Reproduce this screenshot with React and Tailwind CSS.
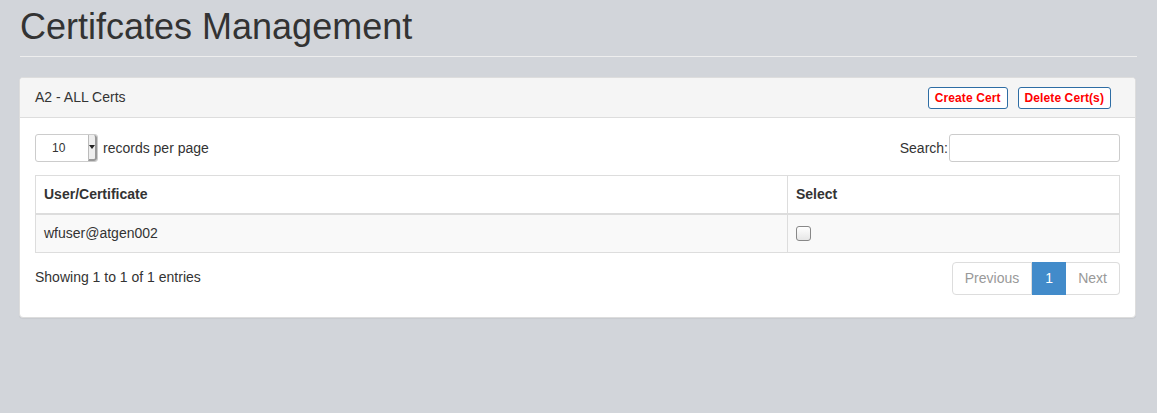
export default function App() {
  return (
    <div className="min-h-[413px] bg-[#d2d5da] px-5 pt-[5px] text-[14px] text-[#333]" style={{ fontFamily: '"Liberation Sans", Arial, sans-serif' }}>
      <h1 className="text-[36px] leading-[40px] font-normal mt-[2px] pb-[9px] border-b border-[#eee]">Certifcates Management</h1>

      <div className="mt-[20px] -ml-[1px] mr-[1px] bg-white border border-[#ddd] rounded-[4px] shadow-[0_1px_1px_rgba(0,0,0,0.05)]">
        <div className="h-[40px] flex items-center justify-between px-[15px] bg-[#f5f5f5] border-b border-[#ddd] rounded-t-[3px]">
          <span className="text-[14px]">A2 - ALL Certs</span>
          <div className="flex gap-[10px] mr-[9px] mt-[1px]">
            <button className="h-[22px] px-[6px] text-[12px] font-bold text-[#f00] bg-white border border-[#2e6da4] rounded-[3px] tracking-[0.1px]">Create Cert</button>
            <button className="h-[22px] px-[6px] text-[12px] font-bold text-[#f00] bg-white border border-[#2e6da4] rounded-[3px] tracking-[0.1px]">Delete Cert(s)</button>
          </div>
        </div>

        <div className="px-[15px] pt-[16px] pb-[22px]">
          <div className="flex items-center justify-between">
            <div className="flex items-center gap-[5px]">
              <div className="relative w-[63px] h-[28px] border border-[#ccc] rounded-[3px] bg-white text-[12px] flex items-center pl-[16px]">
                10
                <div className="absolute right-0 top-0 bottom-0 w-[9px] bg-[#eee] border-l border-[#bbb] border-r-2 border-b-2 border-r-[#999] border-b-[#999] rounded-r-[3px] flex items-center justify-center">
                  <div className="w-0 h-0 border-l-[3px] border-r-[3px] border-t-[4px] border-l-transparent border-r-transparent border-t-[#222]"></div>
                </div>
              </div>
              <span>records per page</span>
            </div>
            <div className="flex items-center">
              <span>Search:</span>
              <input className="ml-[1px] w-[171px] h-[28px] border border-[#ccc] rounded-[3px] bg-white" />
            </div>
          </div>

          <table className="w-full mt-[13px] border-collapse border border-[#ddd]">
            <thead>
              <tr className="h-[38px]">
                <th className="text-left font-bold px-[8px] border border-[#ddd] border-b-2 w-[752px]">User/Certificate</th>
                <th className="text-left font-bold px-[8px] border border-[#ddd] border-b-2">Select</th>
              </tr>
            </thead>
            <tbody>
              <tr className="h-[39px] bg-[#f9f9f9]">
                <td className="px-[8px] border border-[#ddd]">wfuser@atgen002</td>
                <td className="px-[8px] border border-[#ddd]">
                  <div className="w-[15px] h-[15px] mt-[1px] border border-[#888] rounded-[3px] bg-[linear-gradient(#fff,#e6e6e6)]"></div>
                </td>
              </tr>
            </tbody>
          </table>

          <div className="flex items-center justify-between mt-[9px]">
            <span className="mt-[-2px]">Showing 1 to 1 of 1 entries</span>
            <div className="flex h-[33px] text-[14px]">
              <span className="px-[12px] flex items-center text-[#999] border border-[#ddd] rounded-l-[4px] bg-white">Previous</span>
              <span className="w-[34px] flex items-center justify-center text-white bg-[#428bca] border border-[#428bca]">1</span>
              <span className="px-[12px] flex items-center text-[#999] border border-[#ddd] border-l-0 rounded-r-[4px] bg-white">Next</span>
            </div>
          </div>
        </div>
      </div>
    </div>
  );
}
